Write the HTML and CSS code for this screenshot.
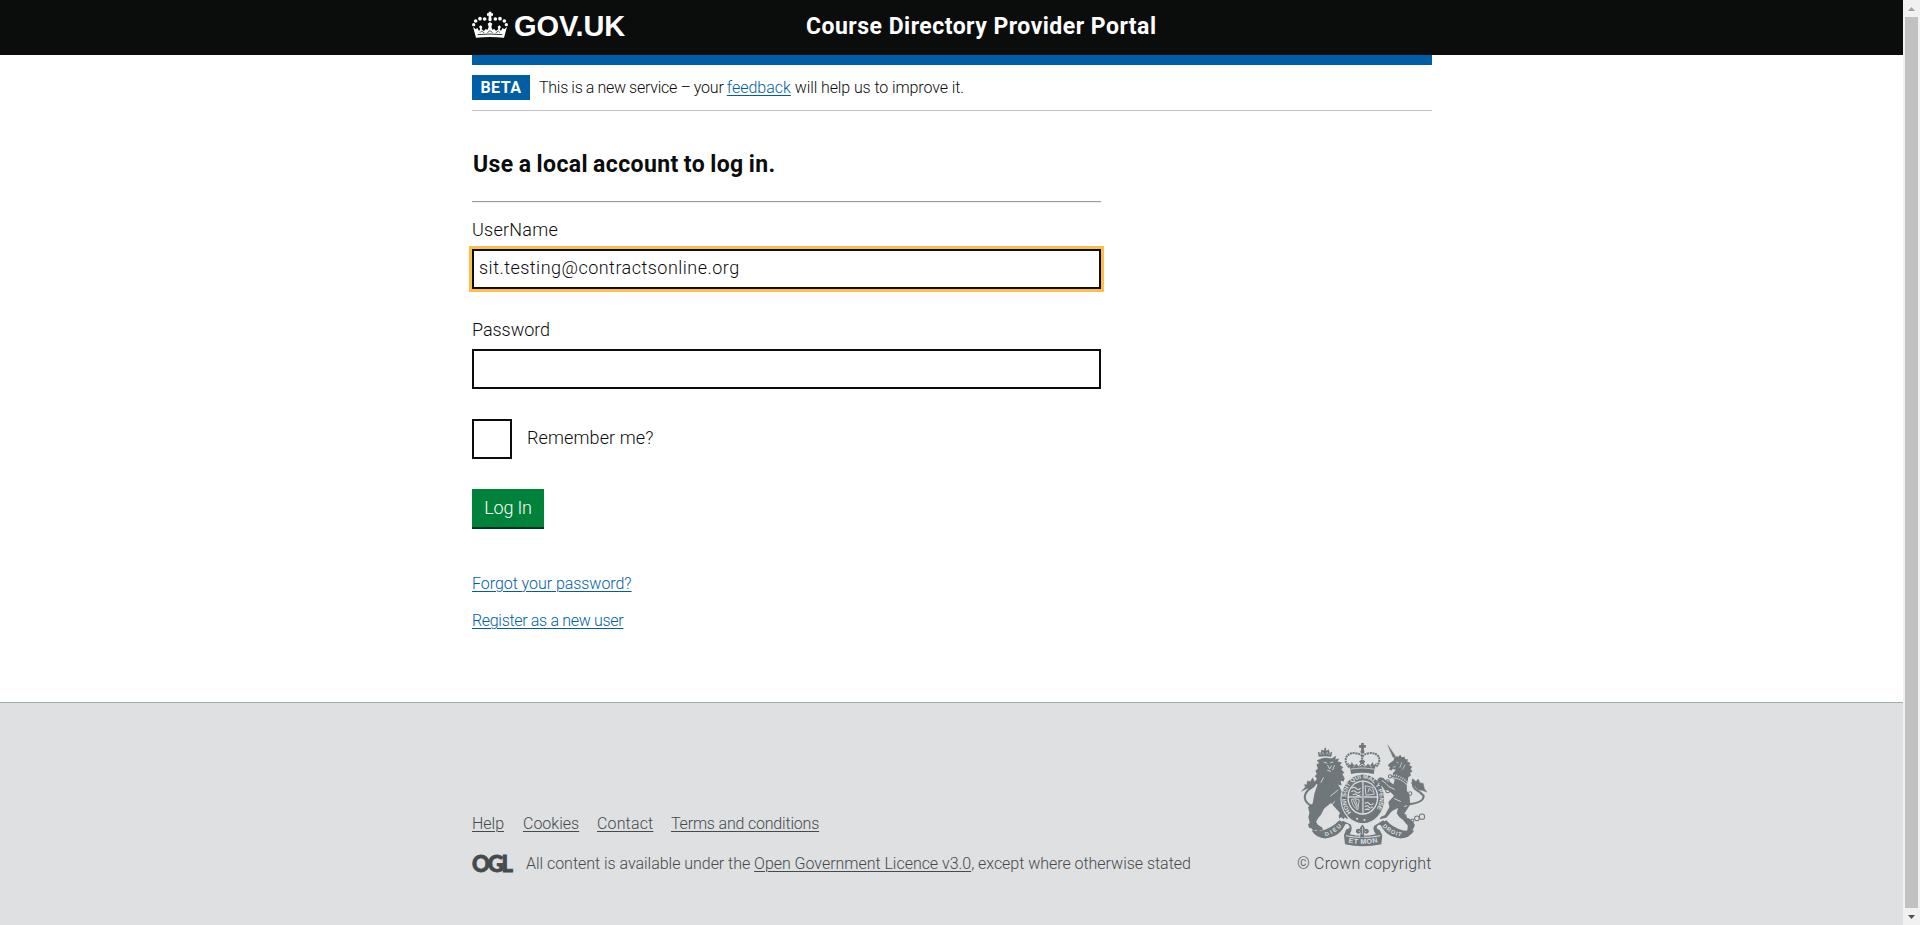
FILE: index.html
```html
<!DOCTYPE html>
<html lang="en">
<head>
<meta charset="utf-8">
<title>Course Directory Provider Portal</title>
<link rel="stylesheet" href="styles.css">
</head>
<body>
<div class="page">
<header class="header">
  <div class="wrap header-inner">
    <a class="logo">
      <svg class="crown" viewBox="36 33 108 81" fill="#fff">
        <path d="M86 35h8v5h5v7h-5v10h-8V47h-5v-7h5z"/>
        <circle cx="90" cy="59" r="5"/>
        <circle cx="60" cy="56" r="5.5"/><circle cx="74" cy="57" r="5.5"/><circle cx="47" cy="63" r="5.5"/><circle cx="41" cy="74" r="5"/>
        <circle cx="120" cy="56" r="5.5"/><circle cx="106" cy="57" r="5.5"/><circle cx="133" cy="63" r="5.5"/><circle cx="139" cy="74" r="5"/>
        <path d="M39 80l7 7 7-2 4 8 4-5-4-8 5-4 5 4-2 8 7 5 5-6 6 2 3-9-3-9 7-5 7 5-3 9 3 9 6-2 5 6 7-5-2-8 5-4 5 4-4 8 4 5 4-8 7 2 7-7-9 33q-42-4-84 0z"/>
        <path d="M53 104q37-4 74 0" stroke="#0b0c0c" stroke-width="2.5" fill="none"/>
        <path d="M60 98l5-5 8 6M82 98l8-6 8 6M107 99l8-6 5 5" stroke="#0b0c0c" stroke-width="2" fill="none"/>
      </svg>
      <span class="govuk">GOV.UK</span>
    </a>
    <span class="service">Course Directory Provider Portal</span>
  </div>
</header>
<main class="wrap main">
  <div class="bluebar"></div>
  <div class="phase"><strong class="tag">BETA</strong><span class="phase-text"><span class="tight">This is a new service – your </span><a class="link">feedback</a><span class="snug"> will help us to improve it.</span></span></div>
  <form class="form">
    <h2 class="heading">Use a local account to log in.</h2>
    <div class="rule"></div>
    <label class="label l-user">UserName</label>
    <div class="field focused"><span class="value">sit.testing@contractsonline.org</span></div>
    <label class="label l-pass">Password</label>
    <div class="field"></div>
    <div class="check"><span class="box"></span><span class="remember">Remember me?</span></div>
    <button class="button" type="button">Log In</button>
    <p class="para forgot"><a class="link">Forgot your password?</a></p>
    <p class="para register"><a class="link">Register as a new user</a></p>
  </form>
</main>
<footer class="footer">
  <div class="wrap footer-inner">
    <div class="meta">
      <nav class="links"><a class="f1">Help</a><a class="f2">Cookies</a><a class="f3">Contact</a><a class="f4">Terms and conditions</a></nav>
      <div class="licence">
        <svg class="ogl" viewBox="0 0 41 17"><text x="0" y="16" textLength="41">OGL</text></svg>
        <span class="licence-text">All content is available under the <a>Open Government Licence v3.0</a>, except where otherwise stated</span>
      </div>
    </div>
    <div class="copy">
      <svg class="crest" viewBox="66 42 375 309" fill="#6f777b">
        <defs>
          <path id="motto" d="M216 248A50 58 0 1 1 284 248"/>
          <path id="rib1" d="M139 320Q170 311 192 284"/>
          <path id="rib2" d="M207 338Q250 348 297 336"/>
          <path id="rib3" d="M308 290Q331 314 366 321"/>
        </defs>
        <!-- royal crown -->
        <path d="M245 42h8v6h6v8h-6v10h-8V56h-6v-8h6z"/>
        <circle cx="249" cy="68" r="6"/>
        <path d="M209 114C188 91 203 69 228 72Q244 74 249 82Q254 74 270 72C296 69 310 91 289 114" fill="none" stroke="#6f777b" stroke-width="6" stroke-dasharray="6 2"/>
        <path d="M248 78v34" stroke="#6f777b" stroke-width="7" stroke-dasharray="5 2"/>
        <path d="M205 100l8 8 4-10 6 10 9-4 5 8 6-9-4-7 9-6 9 6-4 7 6 9 5-8 9 4 6-10 4 10 9-8-8 21q-35-7-71 0z"/>
        <path d="M213 121q35-7 71 0l-1 13q-34-8-68 0z"/>
        <path d="M214 119q35-7 69 0" fill="none" stroke="#dee0e2" stroke-width="2"/>
        <path d="M222 113l5-4M240 111l8-6 8 6M270 109l6 4" fill="none" stroke="#dee0e2" stroke-width="2.5"/>
        <!-- lion -->
        <path d="M119 83l-3-15 9 3 2-10 8 4 1-9 4 0 1 9 8-4 2 10 8-3-3 15q-18-4-37 0z"/>
        <path d="M120 70l6 7M130 68l3 8M145 68l-3 8M154 70l-5 7" stroke="#dee0e2" stroke-width="2"/>
        <path d="M121 90q16-7 36-2l14-8-3 10 12-2-5 9 13 3-6 7 10 8-6 5 9 10-6 4 7 13-3 9-9-2 3 14-10-3 12 24 4 22-7 10 9 13 5 21 6 4-2 10-8-6-3 6-7-6-6 4-2-9 4-8-12-13-15-17-20 17-10 19-8 9-6 12 6 9 12 7 3 9-9-1-4 5-8-6-8 4-5-8-8-2-3-10 5-5-4-17 3-13-4-17 14-11 5-29 9-26-6-5 4-14-6-6 6-7-4-10 7-6-4-12 8-5-7-7z"/>
        <path d="M134 99l10 3M153 101l9-3M145 107l6 12 6-10M144 123l11 3M166 108l-6 14M133 144l-8 16M177 181l-24 19M166 215l-12 18" fill="none" stroke="#dee0e2" stroke-width="2.5"/>
        <path d="M109 234Q78 223 77 203Q78 188 94 177Q107 169 108 158" fill="none" stroke="#6f777b" stroke-width="6"/>
        <path d="M67 186l12-13-3-8 7 1 2-11 9 1 7-11 5 12 12-10-4 13-9 12-14 8-7-3z" stroke="#6f777b"/>
        <!-- garter and shield -->
        <ellipse cx="250" cy="208" rx="65" ry="74" stroke="#dee0e2" stroke-width="3"/>
        <ellipse cx="250" cy="204" rx="46" ry="51" fill="#dee0e2"/>
        <ellipse cx="250" cy="204" rx="42" ry="47"/>
        <path d="M250 154v100M206 202h88" stroke="#dee0e2" stroke-width="5"/>
        <path d="M250 157v95M209 202h82" stroke="#6f777b" stroke-width="1.5"/>
        <path d="M217 177q7-7 13 0t13-1M216 187q7-7 13 0t14-1M220 196q7-5 12 0t11-1M256 222q7-7 13 0t13-1M256 232q7-7 12 0t11-1M256 241q7-5 14 0" fill="none" stroke="#dee0e2" stroke-width="3"/>
        <path d="M257 169l22 5 5 20-25 3zM265 189l4-12 9 10M216 210q14-5 23 1l-4 30q-16-9-19-31M222 212l11 24M228 210l6 20" fill="none" stroke="#dee0e2" stroke-width="2.5"/>
        <text class="motto"><textPath href="#motto" textLength="250">HONI SOIT QUI MAL Y PENSE</textPath></text>
        <circle cx="233" cy="267" r="3" fill="#dee0e2"/><circle cx="255" cy="271" r="3" fill="#dee0e2"/>
        <!-- unicorn -->
        <path d="M324 48l7 9 17 25-8 3z" stroke="#6f777b"/>
        <path d="M343 86l8-5 5 2 5-6 5 7 9-1 0 6 10 2-3 6 10 4-4 6 9 6-5 7 6 6-7 4 2 9-8 5-1 12-4-4q-18-17-42-18l10-13-9-2-5 5-6-4 3-6-6-4 2-6 15-11z"/>
        <path d="M350 98l6 4M366 99l-6 17M376 106l-8 15M340 114l8-3" stroke="#dee0e2" stroke-width="2"/>
        <path d="M340 134q22 0 44 20l-3 10q-21-19-45-20z"/>
        <path d="M342 138q20 2 40 19" stroke="#dee0e2" stroke-width="4" stroke-dasharray="3 4" fill="none"/>
        <path d="M337 147q26 1 44 20l0 16 8 15 2 27-9 14-9 14 9 12 15 8 8 13-6 13-14 22-13 3 9-12 3-24-15-18-10-7-8-12 4-16-18 9-17 20-20 5 3-7 13-6 13-24-3-15 17-18-15-15-14-3-6-10-8-2-1-9-6-3 1-8 8-5 9 2 9 9 10 2 11 8 4-14z"/>
        <path d="M307 153q14 9 21 19l17 8M343 207l20 9M373 231l9-3" fill="none" stroke="#dee0e2" stroke-width="2.5"/>
        <path d="M389 224Q432 218 431 199Q424 190 407 180Q395 170 401 151" fill="none" stroke="#6f777b" stroke-width="6"/>
        <path d="M398 148l10 8 7-7 5 11 10 2 3 15 8 11-13-5-14-2-9-10-10-9z" stroke="#6f777b"/>
        <g fill="none" stroke="#6f777b" stroke-width="3"><circle cx="373" cy="260" r="6"/><circle cx="384" cy="273" r="6"/><circle cx="397" cy="273" r="5"/><circle cx="411" cy="266" r="7"/><circle cx="426" cy="261" r="8"/><circle cx="331" cy="141" r="5"/><circle cx="324" cy="156" r="5"/><circle cx="324" cy="184" r="6"/><circle cx="391" cy="192" r="5"/></g>
        <!-- ribbon -->
        <path d="M190 273q-19 34-62 36l-29-7q8 18 33 21 47-1 61-34 10-13 16-2 6 9-9 12l-6 17q1 10 3 27 52 12 108 0l3-27-8-15q-13-5-7-12 6-9 16 3 20 28 57 31 24-1 37-21l-31 4q-39-1-61-34l-27 16q-7 12 5 25-42 9-78 0 10-15 3-29z"/>
        <path d="M130 302Q160 294 180 272L198 282Q184 320 138 326Q112 324 98 303z"/>
        <path d="M370 302Q338 294 320 272L302 282Q316 320 362 326Q388 324 402 303z"/>
        <path d="M200 318q50 10 102 0" fill="none" stroke="#dee0e2" stroke-width="3"/>
        <path d="M249 284l7 11-4 9q4-11 14-5 6 9-5 13l-8-3 3 14h-15l3-14-8 3q-10-5-5-13 10-6 14 5l-4-9z" stroke="#dee0e2" stroke-width="3" paint-order="stroke"/>
        <path d="M249 292v22M237 303l6 4M261 303l-6 4" stroke="#dee0e2" stroke-width="2"/>
        <text class="rib"><textPath href="#rib1" textLength="58">DIEU</textPath></text>
        <text class="rib rib-mid"><textPath href="#rib2" textLength="88">ET MON</textPath></text>
        <text class="rib"><textPath href="#rib3" textLength="64">DROIT</textPath></text>
      </svg>
      <span class="copy-text">© Crown copyright</span>
    </div>
  </div>
</footer>
</div>
<div class="scrollbar">
  <svg class="arrow" viewBox="0 0 17 17"><path d="M5 11h7L8.5 7z" fill="#a3a3a3"/></svg>
  <div class="thumb"></div>
  <svg class="arrow" viewBox="0 0 17 17"><path d="M5 7h7l-3.5 4z" fill="#505050"/></svg>
</div>
</body>
</html>
```
FILE: styles.css
```css
* { box-sizing: border-box; }
body { margin: 0; height: 925px; display: flex; overflow: hidden; background: #fff; color: #0b0c0c; font-family: Roboto, "Liberation Sans", sans-serif; font-weight: 300; font-size: 16px; }
.page { width: 1903px; height: 925px; display: flex; flex-direction: column; }
.wrap { width: 960px; margin-left: 472px; }
.header { height: 55px; background: #0b0c0c; color: #fff; }
.header-inner { height: 55px; display: flex; align-items: flex-start; }
.logo { display: flex; width: 334px; }
.crown { width: 36px; height: 27px; margin-top: 11px; }
.govuk { margin: 8px 0 0 6px; font: bold 29px/36px "Liberation Sans", Arial, sans-serif; letter-spacing: -0.1px; white-space: nowrap; }
.service { margin-top: 11px; font-size: 23px; line-height: 32px; font-weight: 700; white-space: nowrap; letter-spacing: 0.48px; }
.main { height: 647px; }
.bluebar { height: 10px; background: #005ea5; }
.phase { height: 46px; padding-top: 10px; border-bottom: 1px solid #bfc1c3; display: flex; }
.tag { width: 58px; height: 25px; background: #005ea5; color: #fff; font-size: 16px; line-height: 26px; font-weight: 700; text-align: center; letter-spacing: 0.5px; }
.phase-text { margin-left: 9px; line-height: 26px; white-space: nowrap; }
.tight { letter-spacing: -0.24px; word-spacing: -0.4px; }
.snug { letter-spacing: -0.1px; }
.link { color: #005ea5; text-decoration: underline; text-underline-offset: 2px; text-decoration-thickness: 1px; }
.form { width: 629px; }
.heading { margin: 0; padding: 38px 0 0 1px; height: 90px; font-size: 23px; line-height: 32px; font-weight: 700; letter-spacing: 0.4px; word-spacing: -1px; white-space: nowrap; }
.rule { height: 2px; border-top: 1px solid #9a9a9a; border-bottom: 1px solid #eee; }
.label { display: block; font-size: 18px; line-height: 24px; white-space: nowrap; }
.l-user { margin-top: 15px; height: 31px; letter-spacing: 0.25px; }
.l-pass { margin-top: 28px; height: 32px; padding-top: 1px; letter-spacing: -0.05px; }
.field { height: 40px; border: 2px solid #0b0c0c; padding: 0 5px; font-size: 18px; line-height: 34px; white-space: nowrap; }
.value { letter-spacing: 0.48px; }
.focused { outline: 3px solid #ffbf47; }
.check { margin-top: 30px; display: flex; height: 40px; }
.box { width: 40px; height: 40px; border: 2px solid #0b0c0c; }
.remember { margin-left: 15px; font-size: 18px; line-height: 38px; letter-spacing: 0.12px; white-space: nowrap; }
.button { display: block; margin: 30px 0 0; width: 72px; height: 40px; padding: 0; border: 0; border-bottom: 2px solid #003618; background: #00823b; color: #fff; font: 300 18px/36px Roboto, sans-serif; letter-spacing: -0.2px; white-space: nowrap; }
.para { margin: 0; height: 37px; line-height: 24px; white-space: nowrap; }
.forgot { margin-top: 43px; letter-spacing: -0.05px; }
.register { letter-spacing: -0.32px; }
.footer { height: 223px; background: #dee0e2; border-top: 1px solid #a1acb2; color: #454a4c; }
.footer-inner { display: flex; justify-content: space-between; height: 222px; }
.meta { padding-top: 109px; }
.links { display: flex; height: 40px; line-height: 24px; white-space: nowrap; }
.links a, .licence a { text-decoration: underline; text-underline-offset: 2px; text-decoration-thickness: 1px; }
.links a { display: block; }
.f1 { width: 51px; }
.f2 { width: 74px; }
.f3 { width: 74px; letter-spacing: 0.15px; }
.f4 { letter-spacing: -0.19px; }
.licence { display: flex; line-height: 24px; white-space: nowrap; }
.ogl { width: 41px; height: 17px; margin-top: 4px; overflow: visible; }
.ogl text { font: 900 22px Lato, sans-serif; fill: #454a4c; stroke: #454a4c; stroke-width: 0.8px; }
.licence-text { margin-left: 13px; letter-spacing: -0.03px; }
.copy { width: 135px; padding-top: 40px; display: flex; flex-direction: column; }
.crest { width: 126px; height: 104px; margin-left: 4px; }
.copy-text { margin-top: 5px; line-height: 24px; letter-spacing: 0.18px; white-space: nowrap; }
.motto { font: bold 18px "Liberation Sans", sans-serif; fill: #dee0e2; }
.rib { font: bold 17px "Liberation Sans", sans-serif; fill: #dee0e2; }
.rib-mid { font-size: 21px; }
.scrollbar { width: 17px; height: 925px; background: #f1f1f1; display: flex; flex-direction: column; }
.arrow { width: 17px; height: 17px; display: block; }
.thumb { width: 13px; height: 891px; margin-left: 2px; background: #c1c1c1; }
```
